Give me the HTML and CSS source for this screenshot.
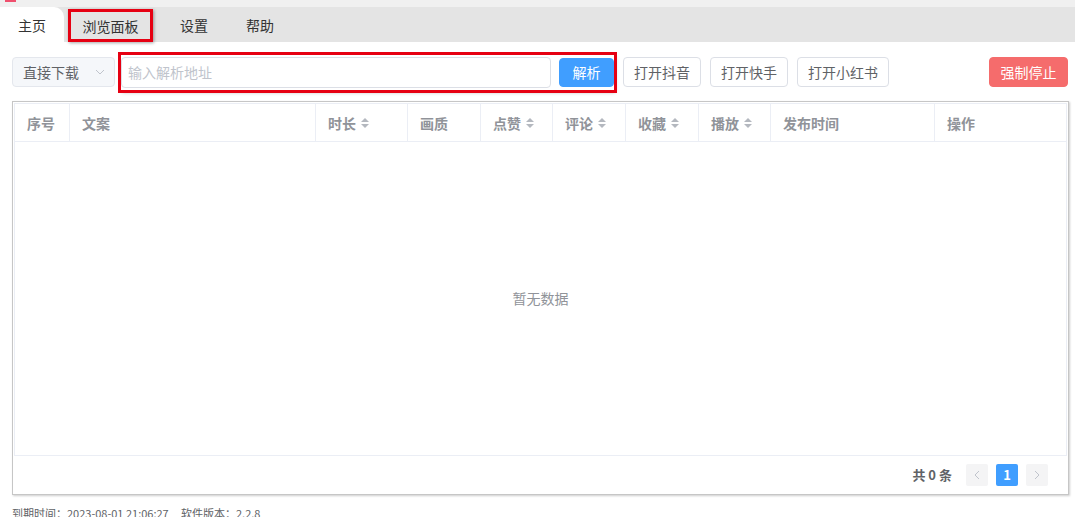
FILE: index.html
```html
<!DOCTYPE html>
<html lang="zh-CN">
<head>
    <meta charset="UTF-8">
    <meta name="viewport" content="width=device-width, initial-scale=1.0">
    <title>主页</title>
    <link rel="stylesheet" href="styles.css">
</head>
<body>
    <div class="titlebar"><span class="app-mark"></span></div>

    <div class="tabs">
        <div class="tab active">主页</div>
        <div class="tab marked">浏览面板</div>
        <div class="tab">设置</div>
        <div class="tab">帮助</div>
    </div>

    <div class="toolbar">
        <div class="select">
            <span>直接下载</span>
            <svg class="chevron" width="10" height="6" viewBox="0 0 10 6"><path d="M1 1 L5 5 L9 1" fill="none" stroke="#c0c4cc" stroke-width="1"/></svg>
        </div>
        <div class="parse-group">
            <input type="text" class="url-input" placeholder="输入解析地址">
            <button class="btn primary">解析</button>
        </div>
        <button class="btn">打开抖音</button>
        <button class="btn">打开快手</button>
        <button class="btn">打开小红书</button>
        <button class="btn danger stop">强制停止</button>
    </div>

    <div class="panel">
        <div class="table">
            <div class="thead">
                <div class="th w-index">序号</div>
                <div class="th w-text">文案</div>
                <div class="th w-dur">时长 <i class="sort"></i></div>
                <div class="th w-q">画质</div>
                <div class="th w-n">点赞 <i class="sort"></i></div>
                <div class="th w-c">评论 <i class="sort"></i></div>
                <div class="th w-c">收藏 <i class="sort"></i></div>
                <div class="th w-n">播放 <i class="sort"></i></div>
                <div class="th w-time">发布时间</div>
                <div class="th w-op">操作</div>
            </div>
            <div class="tbody">
                <span class="empty">暂无数据</span>
            </div>
        </div>
        <div class="pager">
            <span class="total">共 0 条</span>
            <button class="page-btn">
                <svg width="6" height="10" viewBox="0 0 6 10"><path d="M5 1 L1 5 L5 9" fill="none" stroke="#c0c4cc" stroke-width="1"/></svg>
            </button>
            <button class="page-btn current">1</button>
            <button class="page-btn">
                <svg width="6" height="10" viewBox="0 0 6 10"><path d="M1 1 L5 5 L1 9" fill="none" stroke="#c0c4cc" stroke-width="1"/></svg>
            </button>
        </div>
    </div>

    <div class="footer">到期时间：2023-08-01 21:06:27 &nbsp;&nbsp;&nbsp; 软件版本：2.2.8</div>
</body>
</html>
```

FILE: styles.css
```css
* {
    box-sizing: border-box;
}

body {
    margin: 0;
    background-color: #fff;
    font-family: "Noto Sans CJK SC", "Noto Sans", sans-serif;
    font-size: 14px;
    color: #606266;
    overflow: hidden;
}

.titlebar {
    height: 7px;
    background-color: #f0f0f0;
}

.app-mark {
    display: block;
    width: 11px;
    height: 2px;
    margin-left: 5px;
    background-color: #f0506e;
}

.tabs {
    display: flex;
    height: 35px;
    background-color: #e4e4e4;
}

.tab {
    display: flex;
    align-items: center;
    padding: 0 19px;
    color: #333;
}

.tab.active {
    width: 64px;
    justify-content: center;
    padding: 0;
    background-color: #fff;
    border-top-right-radius: 10px;
}

/* red annotation */
.tab.marked {
    width: 85px;
    margin: 2px 8px 0 4px;
    padding: 0;
    justify-content: center;
    outline: 3px solid #e60012;
    outline-offset: -3px;
    box-shadow: 1px 1px 3px rgba(0, 0, 0, 0.35);
}

.toolbar {
    display: flex;
    align-items: center;
    padding: 14px 7px 0 12px;
    height: 46px;
}

.select {
    display: flex;
    align-items: center;
    justify-content: space-between;
    width: 103px;
    height: 30px;
    padding: 0 9px 0 10px;
    background-color: #f5f7fa;
    border: 1px solid #e4e7ed;
    border-radius: 4px;
    color: #606266;
}

.parse-group {
    display: flex;
    align-items: center;
    gap: 8px;
    margin-left: 6px;
    padding: 2px 0;
    outline: 3px solid #e60012;
    box-shadow: 1px 2px 4px rgba(0, 0, 0, 0.35);
}

.url-input {
    width: 430px;
    height: 31px;
    padding: 0 6px;
    border: 1px solid #dcdfe6;
    border-radius: 4px;
    font-family: inherit;
    font-size: 14px;
    color: #606266;
    outline: none;
}

.url-input::placeholder {
    color: #c0c4cc;
}

.btn {
    height: 30px;
    padding: 0 10px;
    margin-left: 9px;
    border: 1px solid #dcdfe6;
    border-radius: 4px;
    background-color: #fff;
    font-family: inherit;
    font-size: 14px;
    color: #606266;
    cursor: pointer;
}

.parse-group .btn {
    margin-left: 0;
}

.btn.primary {
    width: 55px;
    height: 29px;
    background-color: #409eff;
    border-color: #409eff;
    color: #fff;
}

.btn.danger {
    background-color: #f56c6c;
    border-color: #f56c6c;
    color: #fff;
}

.stop {
    width: 79px;
    margin-left: auto;
}

.panel {
    margin: 13px 6px 0 12px;
    height: 394px;
    padding: 1px;
    border: 1px solid #c6c6c6;
    box-shadow: 1px 1px 2px rgba(0, 0, 0, 0.2);
    display: flex;
    flex-direction: column;
}

.table {
    border: 1px solid #ebeef5;
    height: 353px;
    display: flex;
    flex-direction: column;
}

.thead {
    display: flex;
    height: 38px;
    border-bottom: 1px solid #ebeef5;
}

.th {
    display: flex;
    align-items: center;
    padding-left: 12px;
    border-right: 1px solid #ebeef5;
    font-weight: 700;
    color: #909399;
    white-space: pre;
}

.th:last-child {
    border-right: none;
}

.w-index { width: 55px; }
.w-text { width: 246px; }
.w-dur { width: 92px; }
.w-q { width: 73px; }
.w-n { width: 72px; }
.w-c { width: 73px; }
.w-time { width: 164px; }
.w-op { flex: 1; }

.sort {
    display: inline-flex;
    flex-direction: column;
    gap: 2px;
    margin-left: 2px;
}

.sort::before,
.sort::after {
    content: "";
    border-left: 4px solid transparent;
    border-right: 4px solid transparent;
}

.sort::before {
    border-bottom: 4px solid #b4b8bf;
}

.sort::after {
    border-top: 4px solid #b4b8bf;
}

.tbody {
    flex: 1;
    display: flex;
    align-items: center;
    justify-content: center;
    padding-bottom: 2px;
}

.empty {
    color: #909399;
}

.pager {
    flex: 1;
    display: flex;
    align-items: center;
    justify-content: flex-end;
    padding-right: 19px;
    gap: 8px;
}

.total {
    margin-right: 6px;
    font-size: 13px;
    font-weight: 600;
    color: #606266;
}

.page-btn {
    display: flex;
    align-items: center;
    justify-content: center;
    width: 22px;
    height: 22px;
    padding: 0;
    border: none;
    border-radius: 2px;
    background-color: #f4f4f5;
    font-family: inherit;
    font-size: 13px;
    font-weight: 700;
    color: #606266;
}

.page-btn.current {
    background-color: #409eff;
    color: #fff;
}

.footer {
    margin: 10px 0 0 12px;
    font-size: 11px;
    line-height: 16px;
    color: #606266;
}
```
